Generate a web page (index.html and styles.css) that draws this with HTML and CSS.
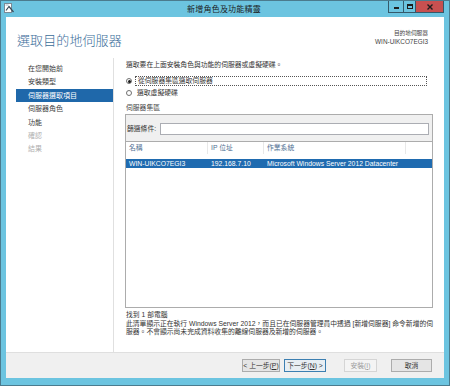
FILE: index.html
```html
<!DOCTYPE html>
<html lang="zh-Hant">
<head>
<meta charset="utf-8">
<title>新增角色及功能精靈</title>
<link rel="stylesheet" href="styles.css">
</head>
<body>
<div class="window">
  <div class="titlebar">
    <div class="tb-left">
      <svg class="app-icon" width="10" height="10" viewBox="0 0 10 10">
        <rect x="0.5" y="0.5" width="7" height="9" fill="#fff" stroke="#7a8a96"/>
        <path d="M2 7.5 L5 3.5 L9.5 9" fill="none" stroke="#3b4a57" stroke-width="1.2"/>
        <rect x="1.5" y="1.5" width="3" height="1" fill="#9fb4c4"/>
      </svg>
    </div>
    <div class="tb-title">新增角色及功能精靈</div>
    <div class="tb-right">
      <div class="cap cap-min"><span class="g-min"></span></div>
      <div class="cap cap-max"><span class="g-max"></span></div>
      <div class="cap cap-close">
        <svg width="6" height="6" viewBox="0 0 6 6"><path d="M0.5 0.5 L5.5 5.5 M5.5 0.5 L0.5 5.5" stroke="#1e1e1e" stroke-width="1.4"/></svg>
      </div>
    </div>
  </div>
  <div class="client">
    <div class="header">
      <h1 class="heading">選取目的地伺服器</h1>
      <div class="dest">
        <div class="dest-label">目的地伺服器</div>
        <div class="dest-name">WIN-UIKCO7EGI3</div>
      </div>
    </div>
    <div class="body">
      <nav class="nav">
        <div class="step">在您開始前</div>
        <div class="step">安裝類型</div>
        <div class="step active">伺服器選取項目</div>
        <div class="step">伺服器角色</div>
        <div class="step">功能</div>
        <div class="step disabled">確認</div>
        <div class="step disabled">結果</div>
      </nav>
      <div class="main">
        <div class="intro">選取要在上面安裝角色與功能的伺服器或虛擬硬碟。</div>
        <div class="radios">
          <div class="radio-row">
            <span class="radio checked"></span>
            <span class="radio-label focus">從伺服器集區選取伺服器</span>
          </div>
          <div class="radio-row second">
            <span class="radio"></span>
            <span class="radio-label">選取虛擬硬碟</span>
          </div>
        </div>
        <div class="pool-label">伺服器集區</div>
        <div class="pool">
          <div class="filter">
            <span class="filter-label">篩選條件:</span>
            <span class="filter-input"></span>
          </div>
          <div class="list">
            <div class="list-head">
              <div class="cell">名稱</div>
              <div class="cell">IP 位址</div>
              <div class="cell">作業系統</div>
              <div class="cell last"></div>
            </div>
            <div class="list-row">
              <div class="cell">WIN-UIKCO7EGI3</div>
              <div class="cell">192.168.7.10</div>
              <div class="cell">Microsoft Windows Server 2012 Datacenter</div>
              <div class="cell last"></div>
            </div>
          </div>
        </div>
        <div class="found">找到 1 部電腦</div>
        <p class="desc">此清單顯示正在執行 Windows Server 2012，而且已在伺服器管理員中透過 [新增伺服器] 命令新增的伺<br>服器。不會顯示尚未完成資料收集的離線伺服器及新增的伺服器。</p>
      </div>
    </div>
    <div class="footer">
      <button class="btn w-prev">&lt; 上一步(<u>P</u>)</button>
      <button class="btn btn-default w-next">下一步(<u>N</u>) &gt;</button>
      <button class="btn btn-disabled w-install">安裝(<u>I</u>)</button>
      <button class="btn w-cancel">取消</button>
    </div>
  </div>
</div>
</body>
</html>
```

FILE: styles.css
```css
* { box-sizing: border-box; }
html, body { margin: 0; padding: 0; }
body {
  width: 450px;
  height: 386px;
  overflow: hidden;
  background: #ffffff;
  font-family: "Liberation Sans", "Noto Sans CJK TC", sans-serif;
  color: #333;
}
.window {
  width: 450px;
  height: 386px;
  border: 1px solid #4b7b8e;
  background: #6cc4e0;
  display: flex;
  flex-direction: column;
}
.titlebar {
  height: 16px;
  flex: 0 0 16px;
  display: grid;
  grid-template-columns: 1fr auto 1fr;
  padding: 0 5px 0 3px;
}
.tb-left { display: flex; align-items: flex-start; padding-top: 2px; }
.app-icon { display: block; }
.tb-title {
  font-size: 8px;
  line-height: 16px;
  color: #1b1b1b;
  letter-spacing: 0.2px;
  font-family: "Noto Sans CJK TC", sans-serif;
}
.tb-right { display: flex; justify-content: flex-end; align-items: flex-start; }
.cap {
  height: 12px;
  border: 1px solid #34596a;
  border-top: none;
  display: flex;
  align-items: center;
  justify-content: center;
  background: #6cc4e0;
}
.cap + .cap { margin-left: -1px; }
.cap-min { width: 16px; }
.cap-max { width: 13px; }
.cap-close { width: 29px; background: #c75050; }
.g-min { width: 5px; height: 2px; background: #1e1e1e; margin-top: 3px; }
.g-max { width: 6px; height: 5px; border: 1px solid #1e1e1e; border-top-width: 2px; }

.client {
  flex: 1;
  margin: 0 5px 7px 5px;
  background: #ffffff;
  display: flex;
  flex-direction: column;
}
.header {
  height: 41px;
  flex: 0 0 41px;
  display: flex;
  justify-content: space-between;
  align-items: flex-start;
  padding: 0 16px 0 11px;
}
.heading {
  margin: 15px 0 0 0;
  font-size: 13px;
  line-height: 16px;
  font-weight: 300;
  color: #3a6d99;
  font-family: "Noto Sans CJK TC", sans-serif;
  letter-spacing: 0.1px;
}
.dest { margin-top: 12px; text-align: right; color: #444; }
.dest-label { font-size: 5.7px; line-height: 8px; }
.dest-name { font-size: 6.4px; line-height: 9px; }

.body { flex: 1; display: flex; }
.nav {
  width: 108px;
  flex: 0 0 108px;
  border-right: 1px solid #e0e0e0;
  padding: 4px 0 0 10px;
}
.step {
  height: 13.4px;
  line-height: 13.4px;
  padding-left: 12px;
  font-size: 7px;
  color: #3c3c3c;
  white-space: nowrap;
}
.step.active { background: #1f68aa; color: #ffffff; }
.step.disabled { color: #b0b0b0; }

.main {
  flex: 1;
  padding: 0 11px;
  display: flex;
  flex-direction: column;
  font-size: 6.8px;
  color: #333;
}
.intro { margin-top: 2px; line-height: 9px; padding-left: 1px; white-space: nowrap; }
.radios { margin-top: 7px; }
.radio-row { height: 10px; display: flex; align-items: center; padding-left: 1px; }
.radio-row.second { margin-top: 2px; }
.radio {
  width: 6px;
  height: 6px;
  border: 1px solid #707070;
  border-radius: 50%;
  background: #fff;
  position: relative;
  flex: 0 0 6px;
}
.radio.checked::after {
  content: "";
  position: absolute;
  left: 0.5px;
  top: 0.5px;
  width: 3px;
  height: 3px;
  border-radius: 50%;
  background: #1a1a1a;
}
.radio-label { margin-left: 3px; line-height: 8px; white-space: nowrap; padding-left: 2px; }
.radio-label.focus { flex: 1; margin-right: 6px; border: 1px dotted #555; height: 10px; }
.pool-label { margin-top: 5px; line-height: 9px; padding-left: 1px; color: #444; }
.pool {
  margin-top: 2px;
  height: 194px;
  border: 1px solid #acacac;
  display: flex;
  flex-direction: column;
}
.filter {
  background: #f0f0f0;
  padding: 8px 3px 6px 1px;
  display: flex;
  align-items: center;
}
.filter-label { width: 33px; flex: 0 0 33px; line-height: 12px; white-space: nowrap; }
.filter-input { flex: 1; height: 12px; border: 1px solid #abadb3; background: #fff; }
.list { flex: 1; background: #fff; border-top: 1px solid #acacac; }
.list-head, .list-row {
  display: grid;
  grid-template-columns: 82px 56px 142px 1fr;
}
.list-head { height: 12px; line-height: 12px; color: #4f6f92; }
.list-head .cell { border-right: 1px solid #e8e8e8; }
.list-head .cell.last { border-right: none; }
.cell { padding-left: 3px; white-space: nowrap; overflow: hidden; }
.list-row {
  margin-top: 5px;
  height: 9px;
  line-height: 9px;
  background: #1f6bb0;
  color: #ffffff;
}
.found { margin-top: 2px; line-height: 9px; padding-left: 1px; }
.desc { margin: 1px 0 0 0; line-height: 8px; padding-left: 1px; white-space: nowrap; }

.footer {
  height: 26px;
  flex: 0 0 26px;
  background: #f0f0f0;
  border-top: 1px solid #dfdfdf;
  display: flex;
  justify-content: flex-end;
  align-items: center;
  padding-right: 12px;
}
.btn {
  height: 13px;
  padding: 0;
  border: 1px solid #acacac;
  background: #e5e5e5;
  font-family: "Liberation Sans", "Noto Sans CJK TC", sans-serif;
  font-size: 6.8px;
  line-height: 11px;
  color: #333;
  text-align: center;
  white-space: nowrap;
}
.btn u { text-decoration: underline; }
.btn-default { border-color: #3c7fb1; background: #e8eef3; }
.btn-disabled { border-color: #d5d5d5; background: #f4f4f4; color: #a0a0a0; }
.w-prev { width: 38px; }
.w-next { width: 42px; margin-left: 4px; }
.w-install { width: 33px; margin-left: 18px; }
.w-cancel { width: 41px; margin-left: 14px; }
```
